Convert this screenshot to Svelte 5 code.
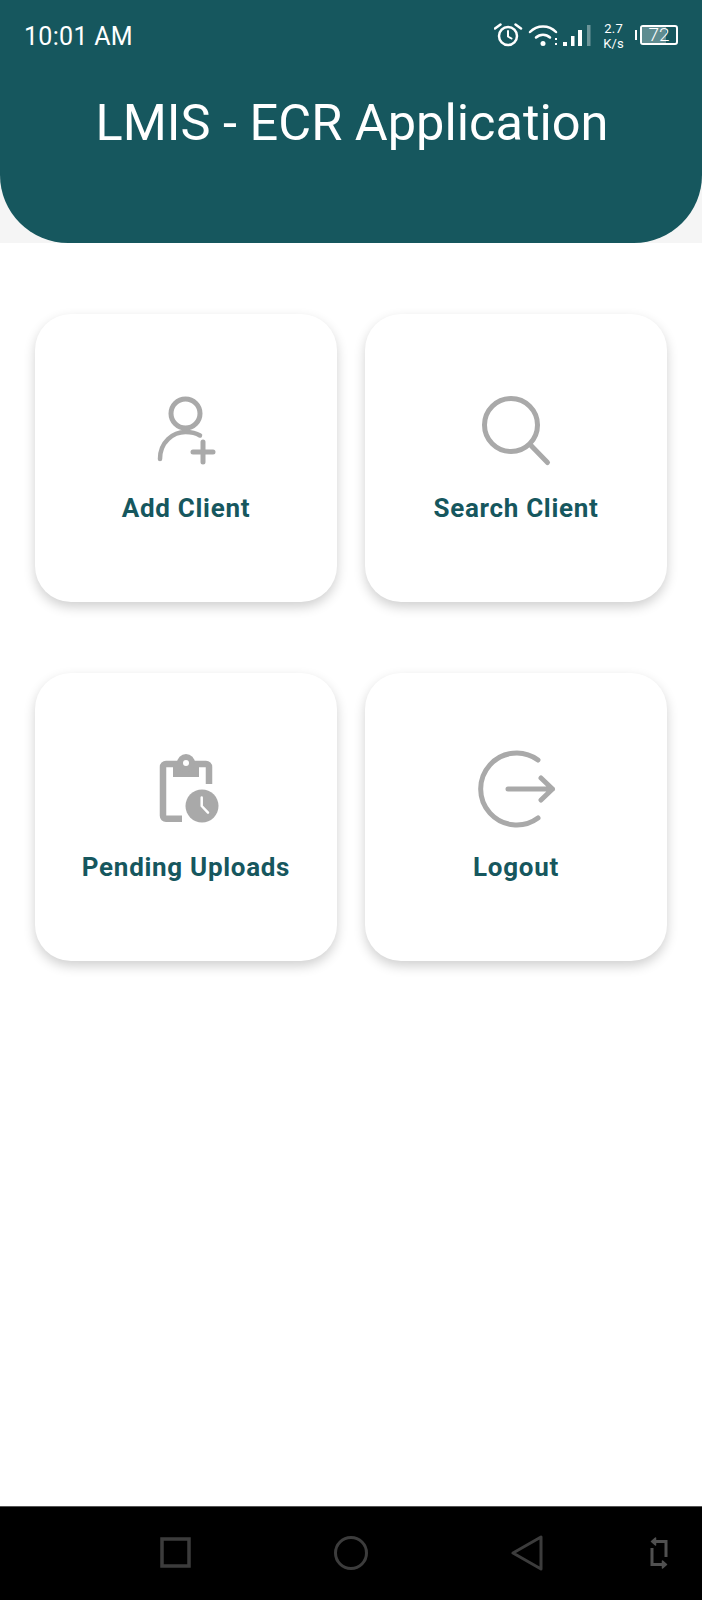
<script lang="ts">
    const cards = [
        { key: 'add', label: 'Add Client' },
        { key: 'search', label: 'Search Client' },
        { key: 'pending', label: 'Pending Uploads' },
        { key: 'logout', label: 'Logout' },
    ]
</script>

<div class="screen">
    <div class="header-wrap">
        <header class="header">
            <div class="status">
                <span class="time">10:01 AM</span>
                <div class="status-right">
                    <svg class="status-icons" width="98" height="26" viewBox="0 0 98 26" fill="none" stroke="#fff" stroke-width="2.5" stroke-linecap="round">
                        <!-- alarm -->
                        <circle cx="14" cy="13" r="9" />
                        <path d="M14 8v5.500l3.500 2" stroke-width="2" />
                        <path d="M1 5.500 6.500 1.500M27 5.500 21.500 1.500" />
                        <!-- wifi -->
                        <path d="M36 9a18 18 0 0 1 26 0" />
                        <path d="M42 14.500a10 10 0 0 1 14 0" />
                        <circle cx="49" cy="20.500" r="2.500" fill="#fff" stroke="none" />
                        <rect x="61" y="15" width="2" height="2" fill="#fff" stroke="none" />
                        <rect x="61" y="20" width="2" height="2" fill="#fff" stroke="none" />
                        <!-- signal -->
                        <rect x="69" y="19" width="4" height="4" fill="#fff" stroke="none" />
                        <rect x="77" y="13" width="3.500" height="10" fill="#fff" stroke="none" />
                        <rect x="84" y="7" width="4" height="16" fill="#fff" stroke="none" />
                        <rect x="93" y="2" width="3.500" height="21" fill="#6d9599" stroke="none" />
                    </svg>
                    <div class="speed"><span>2.7</span><span>K/s</span></div>
                    <div class="battery">
                        <span class="nub"></span>
                        <div class="cell"><span class="fill"></span><span class="level">72</span></div>
                    </div>
                </div>
            </div>
            <h1 class="title">LMIS - ECR Application</h1>
        </header>
    </div>

    <main class="grid">
        {#each cards as card (card.key)}
            <div class="card">
                <svg class="icon" width="90" height="90" viewBox="0 0 90 90" fill="none" stroke="#a9a9a9" stroke-linecap="round" stroke-linejoin="round">
                    {#if card.key === 'add'}
                        <circle cx="44.500" cy="27.500" r="14.500" stroke-width="5" />
                        <path d="M19 73C19 56 32 46 44.500 46C50 46 55 47 59 49.500" stroke-width="4.500" />
                        <path d="M52 66h20M62 56v20" stroke-width="5" />
                    {:else if card.key === 'search'}
                        <circle cx="40" cy="39" r="26.500" stroke-width="5" />
                        <path d="M60 59.500 76.500 76.500" stroke-width="5" />
                    {:else if card.key === 'pending'}
                        <path d="M41 73.750H25a3 3 0 0 1-3-3V22a3 3 0 0 1 3-3H65a3 3 0 0 1 3 3V39" stroke-width="6.500" stroke-linecap="butt" />
                        <rect x="32" y="19" width="26" height="13" fill="#a9a9a9" stroke="none" />
                        <circle cx="45" cy="18" r="9" fill="#a9a9a9" stroke="none" />
                        <circle cx="45" cy="18" r="3" fill="#fff" stroke="none" />
                        <circle cx="61" cy="61" r="16.500" fill="#a9a9a9" stroke="none" />
                        <path d="M60.700 52.500V61L67 67.700" stroke="#fff" stroke-width="2.500" fill="none" />
                    {:else}
                        <path d="M67 15A36 36 0 1 0 67 73" stroke-width="5" />
                        <path d="M37 44H81.500M70 33 81.500 44 70 55" stroke-width="5" />
                    {/if}
                </svg>
                <span class="label">{card.label}</span>
            </div>
        {/each}
    </main>

    <nav class="nav">
        <div class="nav-main">
            <svg width="34" height="36" viewBox="0 0 34 36" fill="none" stroke="#3c3c3c" stroke-width="3.500">
                <rect x="4" y="4" width="27" height="27" />
            </svg>
            <svg width="34" height="36" viewBox="0 0 34 36" fill="none" stroke="#3c3c3c" stroke-width="3">
                <circle cx="17" cy="18" r="15.500" />
            </svg>
            <svg width="34" height="36" viewBox="0 0 34 36" fill="none" stroke="#3c3c3c" stroke-width="3" stroke-linejoin="round">
                <path d="M31 2V34L3 18Z" />
            </svg>
        </div>
        <svg width="34" height="36" viewBox="0 0 34 36" fill="none" stroke="#505050" stroke-width="3">
            <path d="M12 6.500H25V22M22 29.500H11V13" />
            <path d="M14.500 3 10.500 6.500 14.500 10ZM21.500 26 25.500 29.500 21.500 33Z" fill="#505050" stroke-width="1.500" stroke-linejoin="round" />
        </svg>
    </nav>
</div>

<style>
:global(body) {
    background-color: #fff;
}

.screen {
    display: flex;
    flex-direction: column;
    width: 702px;
    height: 1600px;
    font-family: Roboto, "Liberation Sans", sans-serif;
    background-color: #fff;
}

.header-wrap {
    background-color: #f5f5f5;
}

.header {
    height: 243px;
    box-sizing: border-box;
    padding: 23px 24px 0 24px;
    background-color: #16575e;
    border-radius: 0 0 68px 68px;
    color: #fff;
}

.status {
    display: flex;
    justify-content: space-between;
    align-items: center;
    height: 26px;
}

.time {
    font-size: 25px;
    font-weight: 400;
    letter-spacing: 0.3px;
}

.status-right {
    display: flex;
    align-items: center;
}

.status-icons {
    display: block;
}

.speed {
    display: flex;
    flex-direction: column;
    align-items: center;
    margin-left: 11px;
    font-size: 13px;
    font-weight: 400;
    letter-spacing: 0.2px;
    line-height: 15px;
}

.battery {
    display: flex;
    align-items: center;
    margin: 0 0 2px 11px;
}

.nub {
    width: 2px;
    height: 10px;
    margin-right: 3px;
    background-color: #fff;
}

.cell {
    position: relative;
    display: flex;
    justify-content: center;
    align-items: center;
    width: 38px;
    height: 20px;
    box-sizing: border-box;
    border: 2px solid #fff;
    border-radius: 3px;
}

.fill {
    position: absolute;
    left: 0;
    top: 0;
    bottom: 0;
    width: 72%;
    background-color: #5f8c90;
}

.level {
    position: relative;
    font-size: 19px;
    font-weight: 300;
    line-height: 16px;
}

.title {
    margin: 44px 0 0;
    padding-left: 2px;
    font-size: 50.5px;
    font-weight: 400;
    line-height: 60px;
    text-align: center;
}

.grid {
    flex: 1;
    display: grid;
    grid-template-columns: 302px 302px;
    grid-auto-rows: 288px;
    column-gap: 28px;
    row-gap: 71px;
    align-content: start;
    padding: 71px 0 0 35px;
}

.card {
    display: flex;
    flex-direction: column;
    align-items: center;
    padding-top: 72px;
    box-sizing: border-box;
    background-color: #fff;
    border-radius: 36px;
    box-shadow: 0 5px 12px rgba(0, 0, 0, 0.19);
}

.icon {
    display: block;
}

.label {
    margin-top: 17px;
    font-size: 26px;
    font-weight: 700;
    letter-spacing: 0.7px;
    line-height: 30px;
    color: #16575e;
}

.nav {
    display: flex;
    justify-content: space-between;
    align-items: center;
    height: 94px;
    box-sizing: border-box;
    padding: 0 27px 2px 158px;
    background-color: #000;
    border-top: 1px solid #555;
}

.nav-main {
    display: flex;
    gap: 142px;
}
</style>
